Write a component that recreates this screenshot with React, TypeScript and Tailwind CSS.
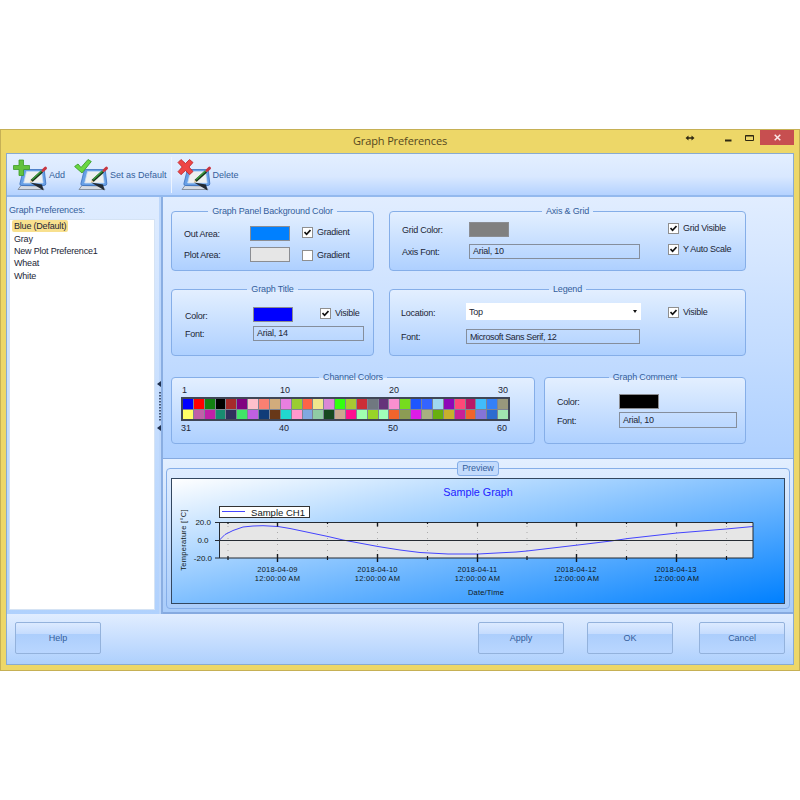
import { useState, type ReactNode } from "react";
import clsx from "clsx";

const PREFERENCES = ["Blue (Default)", "Gray", "New Plot Preference1", "Wheat", "White"];

const CHANNEL_COLORS = [
  "#0000ff", "#ff0000", "#128012", "#000000", "#a52a2a", "#800080", "#ffc0cb", "#fa8072", "#d2ac7c", "#e87fe0",
  "#9acd32", "#ff6347", "#f0e68c", "#da88d6", "#32ff10", "#a8c832", "#cc2e36", "#707880", "#66337a", "#fa90d0",
  "#76dc1e", "#1e56ff", "#3464ff", "#a0d8f0", "#8e08b8", "#ff4878", "#b81868", "#40bcfa", "#3380f8", "#98987c",
  "#ffff66", "#c060a8", "#c020a8", "#188c70", "#30305c", "#40e468", "#c060e0", "#103c78", "#683818", "#20d8d0",
  "#ff98cc", "#80a8e0", "#90cca4", "#184820", "#cca890", "#ff1090", "#a0ffb0", "#98d428", "#a0ffb8", "#f0642c",
  "#8c9c54", "#dc1ce8", "#a8b080", "#68b010", "#c8b02c", "#c82098", "#f0642c", "#8474d8", "#2c6cd0", "#a0e4b0",
];

const MAJOR_TICKS = [
  { x: 106.5, date: "2018-04-09" },
  { x: 206.5, date: "2018-04-10" },
  { x: 306.5, date: "2018-04-11" },
  { x: 405.5, date: "2018-04-12" },
  { x: 505.5, date: "2018-04-13" },
];
const MINOR_TICKS = [57, 156.5, 256.5, 356, 455.5, 555.5];

export default function App() {
  const [selected, setSelected] = useState(PREFERENCES[0]);

  return (
    <div className="h-[800px] w-[800px] overflow-hidden bg-white pt-[129px] font-['Liberation_Sans',Arial,sans-serif] text-[9px] leading-[12px] tracking-[-0.25px] text-[#1c2636]">
      <div className="flex h-[542px] flex-col border border-[#c6b055] bg-[#edd768] px-[5px] pb-[5px]">
        <TitleBar />
        <div className="flex min-h-0 flex-1 flex-col border border-[#8aabcf]">
          <Toolbar />
          <div className="flex min-h-0 flex-1">
            <div className="flex w-[152px] flex-col bg-linear-to-b from-[#dfecff] to-[#b0d1fd] pt-[7px] pr-1 pb-[4px] pl-[2px]">
              <p className="tracking-[-0.15px] text-[#34609c]">Graph Preferences:</p>
              <ul className="mt-[3px] flex-1 border border-[#d5e3f4] bg-white pl-[2px]">
                {PREFERENCES.map((name) => (
                  <li key={name} className="flex h-[12.4px] items-center">
                    <button
                      onClick={() => setSelected(name)}
                      className={clsx(
                        "px-[2px] leading-[12px] tracking-[-0.2px]",
                        selected === name && "rounded-[2px] bg-[#f8e08e]"
                      )}
                    >
                      {name}
                    </button>
                  </li>
                ))}
              </ul>
            </div>
            <Splitter />
            <div className="flex min-w-0 flex-1 flex-col">
              <Settings />
              <Preview />
            </div>
          </div>
          <Footer />
        </div>
      </div>
    </div>
  );
}

function TitleBar() {
  return (
    <div className="relative flex h-[23px] shrink-0 items-start justify-end">
      <span className="absolute inset-x-0 top-[3px] text-center font-['Open_Sans',sans-serif] text-[11px] leading-[16px] tracking-[-0.12px] text-[#55481f]">
        Graph Preferences
      </span>
      <svg className="mt-[4px] mr-[30px] h-[8px] w-[10px]" viewBox="0 0 10 8" fill="#2e2812">
        <path d="M0.5 4 3.5 1.5v1.8h3V1.5L9.5 4 6.5 6.5V4.7h-3v1.8z" />
      </svg>
      <svg className="mt-[4px] mr-[13px] h-[8px] w-[7px]" viewBox="0 0 7 8">
        <path d="M0 6.500h6.5" stroke="#2e2812" strokeWidth="2" />
      </svg>
      <svg className="mt-[4px] mr-[6px] h-[8px] w-[9px]" viewBox="0 0 9 8" fill="none" stroke="#2e2812">
        <path d="M.5 1.5h8v5h-8zM.5 2h8" />
      </svg>
      <button className="flex h-[15px] w-[34px] items-center justify-center bg-[#c74f50]">
        <svg className="h-[7px] w-[7px]" viewBox="0 0 7 7" stroke="#fbe9e9" strokeWidth="1.5">
          <path d="M.7.7l5.6 5.6M6.3.7.7 6.3" />
        </svg>
      </button>
    </div>
  );
}

function Toolbar() {
  return (
    <div className="flex h-[43px] shrink-0 items-center border-b-2 border-[#93b9ee] bg-linear-to-b from-[#e3efff] via-[#d9e8ff] via-55% to-[#b4d2ff] pl-[6px] tracking-normal text-[#34609c]">
      <ToolButton
        label="Add"
        badge={<path d="M6 3h4.500v5.500h6V12.500h-6v6H6v-6H.5v-4H6z" fill="#63c23d" stroke="#3d9c28" strokeWidth=".8" />}
      />
      <div className="w-[9px]" />
      <ToolButton
        label="Set as Default"
        badge={<path d="M.6 9.500 4 7l3 3.500L14 2.500l3.300 2L8 16z" fill="#6ad742" stroke="#3c9e2e" strokeWidth=".9" />}
      />
      <div className="mr-[5px] ml-[4px] h-[36px] w-px bg-[#edf4ff]" />
      <ToolButton
        label="Delete"
        badge={
          <path
            d="M1 5.500 4 2.500l4.500 4L12.500 2.500l3.500 3-4 4.500 4 4.500-3.500 3.200-4-4.200-4.500 4.200L1 14.700 5.200 10z"
            fill="#ee4646"
            stroke="#bb2229"
            strokeWidth=".8"
          />
        }
      />
    </div>
  );
}

function ToolButton({ label, badge }: { label: string; badge: ReactNode }) {
  return (
    <button className="flex items-center gap-px">
      <svg className="h-[36px] w-[35px]" viewBox="0 0 35 36">
        <path d="M8 28.500 5 32.500h26L28.500 29z" fill="#d5dbe4" stroke="#76808e" strokeWidth=".8" />
        <path
          d="M12 12.500h18q1.200 0 1.400 1.500l1.400 12.500q.1 2-1.800 2H8.500q-1.900 0-1.600-1.800L10 14q.4-1.500 2-1.500z"
          fill="#68a0e6"
          stroke="#3a70be"
          strokeWidth=".8"
        />
        <path d="M13.500 14.500h15l1.600 11.500H10.700z" fill="#eef0f0" stroke="#c6dcf4" strokeWidth=".8" />
        <path d="M18.500 24 29 14.500" stroke="#173317" strokeWidth="3" />
        <path d="M19.200 22.500 28.500 14" stroke="#3fa043" strokeWidth="1.500" />
        <path d="M30 13.500l2.500-2.300" stroke="#c73540" strokeWidth="3" strokeLinecap="round" />
        <path d="M16.500 25.500l1.500-2.200 1.700 1.600z" fill="#e8cf9c" />
        <path d="M17 25.500 29 27.500l1.500 6-4-2.500z" fill="#222a33" />
        {badge}
      </svg>
      {label}
    </button>
  );
}

function Splitter() {
  return (
    <div className="flex w-[4px] flex-col items-center justify-center border-r-2 border-[#8aaee2] bg-[#bdd7fb]">
      <svg className="h-[50px] w-[6px] shrink-0 -translate-x-px" viewBox="0 0 6 50">
        <path d="M5 0v6L1 3zM5 44v6l-4-3z" fill="#20304e" />
        <path d="M4 11v29" stroke="#20304e" strokeWidth="1.500" strokeDasharray="1.500 1.500" />
      </svg>
    </div>
  );
}

function Settings() {
  return (
    <div className="flex h-[261px] shrink-0 flex-col bg-linear-to-b from-[#e1edff] to-[#aed0ff] pt-[8px] pl-[8px]">
      <div className="flex gap-[15px]">
        <Group title="Graph Panel Background Color" className="h-[66px] w-[203px]">
          <div className="flex pt-[8px] pl-[12px]">
            <div className="flex w-[118px] flex-col gap-[6px]">
              <Row label="Out Area:" labelClass="w-[66px] pt-[2px]">
                <Swatch className="bg-[#0080ff]" />
              </Row>
              <Row label="Plot Area:" labelClass="w-[66px] pt-[2px]">
                <Swatch className="bg-[#e6e6e6]" />
              </Row>
            </div>
            <div className="flex flex-col gap-[11px]">
              <Check label="Gradient" initial />
              <Check label="Gradient" />
            </div>
          </div>
        </Group>
        <Group title="Axis & Grid" className="h-[66px] w-[357px]">
          <div className="flex pt-[4px] pl-[12px]">
            <div className="flex w-[266px] flex-col gap-[7px]">
              <Row label="Grid Color:" labelClass="w-[67px] pt-[2px]">
                <Swatch className="bg-[#808080]" />
              </Row>
              <Row label="Axis Font:" labelClass="w-[67px] pt-[2px]">
                <FontField value="Arial, 10" className="w-[171px]" />
              </Row>
            </div>
            <div className="flex flex-col gap-[9px]">
              <Check label="Grid Visible" initial />
              <Check label="Y Auto Scale" initial />
            </div>
          </div>
        </Group>
      </div>

      <div className="mt-[12px] flex gap-[15px]">
        <Group title="Graph Title" className="h-[73px] w-[203px]">
          <div className="flex flex-col gap-[4px] pt-[11px] pl-[13px]">
            <Row label="Color:" labelClass="w-[68px] pt-[3px]">
              <Swatch className="bg-[#0000ff]" />
              <div className="ml-[27px]">
                <Check label="Visible" initial />
              </div>
            </Row>
            <Row label="Font:" labelClass="w-[68px] pt-[2px]">
              <FontField value="Arial, 14" className="w-[111px]" />
            </Row>
          </div>
        </Group>
        <Group title="Legend" className="h-[73px] w-[357px]">
          <div className="flex flex-col gap-[9px] pt-[7px] pl-[11px]">
            <Row label="Location:" labelClass="w-[65px] pt-[4px]">
              <div className="flex h-[17px] w-[175px] items-center justify-between bg-white pr-[4px] pl-[3px]">
                Top
                <span className="border-x-[2.500px] border-t-[3px] border-x-transparent border-t-[#111]" />
              </div>
              <div className="ml-[27px] pt-[3px]">
                <Check label="Visible" initial />
              </div>
            </Row>
            <Row label="Font:" labelClass="w-[65px] pt-[2px]">
              <FontField value="Microsoft Sans Serif, 12" className="w-[174px] pt-px tracking-[-0.38px]" />
            </Row>
          </div>
        </Group>
      </div>

      <div className="mt-[15px] flex gap-[9px]">
        <Group title="Channel Colors" className="h-[73px] w-[364px]">
          <div className="w-[338px] pl-[9px] tracking-normal">
            <div className="pl-px">
              <ChannelNumbers values={["1", "10", "20", "30"]} />
            </div>
            <div className="mt-px grid h-[24px] w-[329px] grid-cols-30 gap-px border-2 border-[#3f4656] bg-[#7d8494]">
              {CHANNEL_COLORS.map((color, i) => (
                <span key={i} style={{ backgroundColor: color }} />
              ))}
            </div>
            <div className="mt-px">
              <ChannelNumbers values={["31", "40", "50", "60"]} />
            </div>
          </div>
        </Group>
        <Group title="Graph Comment" className="h-[73px] w-[202px]">
          <div className="flex flex-col gap-[3px] pt-[10px] pl-[12px]">
            <Row label="Color:" labelClass="w-[62px] pt-[2px]">
              <Swatch className="bg-black" />
            </Row>
            <Row label="Font:" labelClass="w-[62px] pt-[3px]">
              <FontField value="Arial, 10" className="h-[16px] w-[118px] pt-px" />
            </Row>
          </div>
        </Group>
      </div>
    </div>
  );
}

function Group({ title, className, children }: { title: string; className?: string; children: ReactNode }) {
  return (
    <fieldset className={clsx("min-w-0 shrink-0 rounded-[4px] border border-[#85aee8] bg-linear-to-b from-[#e3efff] to-[#aed0ff]", className)}>
      <legend className="mx-auto h-[13px] px-[4px] leading-[12px] tracking-[-0.16px] text-[#34609c]">{title}</legend>
      {children}
    </fieldset>
  );
}

function Row({ label, labelClass, children }: { label: string; labelClass: string; children: ReactNode }) {
  return (
    <div className="flex items-start">
      <span className={clsx("shrink-0", labelClass)}>{label}</span>
      {children}
    </div>
  );
}

function Swatch({ className }: { className?: string }) {
  return <button className={clsx("h-[15px] w-[40px] shrink-0 border border-[#8b8d92]", className)} />;
}

function FontField({ value, className }: { value: string; className?: string }) {
  return <div className={clsx("min-h-[15px] shrink-0 border border-[#858e9c] pl-[3px] leading-[12px]", className)}>{value}</div>;
}

function Check({ label, initial = false }: { label: string; initial?: boolean }) {
  const [checked, setChecked] = useState(initial);
  return (
    <button onClick={() => setChecked(!checked)} className="flex h-[12px] items-center gap-[4px]">
      <span className="flex h-[11px] w-[11px] items-center justify-center border border-[#8f8f8f] bg-white">
        {checked && (
          <svg className="h-[7px] w-[7px]" viewBox="0 0 7 7" fill="none" stroke="#111" strokeWidth="1.700">
            <path d="M.5 3 2.600 5.300 6.500 1" />
          </svg>
        )}
      </span>
      {label}
    </button>
  );
}

function ChannelNumbers({ values }: { values: string[] }) {
  return (
    <div className="flex h-[12px]">
      {values.map((v, i) => (
        <span key={v} className={clsx("shrink-0", i === 0 ? "w-[98px]" : i === 3 ? "w-[20px]" : "w-[109px]")}>
          {v}
        </span>
      ))}
    </div>
  );
}

function Preview() {
  return (
    <div className="flex flex-1 flex-col border-t border-b-2 border-[#86aae0] bg-linear-to-b from-[#e3efff] to-[#a9ccfa] px-[3px] pt-[2px] pb-[3px]">
      <fieldset className="flex-1 rounded-[4px] border border-[#85aee8] px-[4px]">
        <legend className="mx-auto h-[15px] rounded-[3px] border border-[#85aee8] bg-[#c3dbfc] px-[4px] leading-[12px] tracking-[-0.05px] text-[#34609c]">
          Preview
        </legend>
        <SampleGraph />
      </fieldset>
    </div>
  );
}

function SampleGraph() {
  return (
    <div className="mt-[2px] h-[126px] border border-[#33475f] bg-linear-to-br/srgb from-white to-[#0080ff]">
      <svg className="block h-[124px] w-[612px]" viewBox="1 1 612 124" fill="#101820" fontSize="7.500" textAnchor="middle">
        <text x="307" y="18" fontSize="10.800" letterSpacing="0" fill="#2222ff">
          Sample Graph
        </text>
        <rect x="48.500" y="28.500" width="90" height="11" fill="#fff" stroke="#333" />
        <path d="M51 33.500h23" stroke="#4646ff" />
        <text x="107" y="37.500" fontSize="9.500" letterSpacing="0">
          Sample CH1
        </text>

        <rect x="48.500" y="44.500" width="533.500" height="35.500" fill="#e6e6e6" />
        {[...MAJOR_TICKS.map((t) => t.x), ...MINOR_TICKS].map((x) => (
          <path key={x} d={`M${x} 48v29`} stroke="#aaa" strokeDasharray="1 5" />
        ))}
        <path
          d="M48.500 62 54 56.500 62 52.500 72 49 82 48l10-.3 15 .8 12 2 38 8L172 62l35 6.500 22 3.500 20 2.500 28 1.500h30l38-2 11-1 51-6 33-4 17-2.500 49-5.500 49-4 27-2.500"
          fill="none"
          stroke="#4444ff"
        />
        <path d="M44 44.500h538v35.500H44M44 62.500h538M48.500 44.500V80" fill="none" stroke="#252b33" />
        {MAJOR_TICKS.map(({ x, date }) => (
          <g key={x}>
            <path d={`M${x} 44v4.500M${x} 76v8`} stroke="#15191f" strokeWidth="1.400" />
            <text x={x} y="94" letterSpacing=".2">
              {date}
            </text>
            <text x={x} y="103" letterSpacing=".3">
              12:00:00 AM
            </text>
          </g>
        ))}
        {MINOR_TICKS.map((x) => (
          <path key={x} d={`M${x} 44v2M${x} 78v4`} stroke="#15191f" strokeWidth="1.200" />
        ))}
        <g textAnchor="end" fontSize="8" letterSpacing="0">
          <text x="40" y="47">20.0</text>
          <text x="37.500" y="65">0.0</text>
          <text x="41" y="83">-20.0</text>
        </g>
        <text x="315" y="116.500" letterSpacing=".2">
          Date/Time
        </text>
        <text transform="translate(15 62) rotate(-90)" letterSpacing=".3">
          Temperature [°C]
        </text>
      </svg>
    </div>
  );
}

function Footer() {
  return (
    <div className="flex h-[50px] shrink-0 items-start bg-linear-to-b from-[#e1edff] to-[#aed0fd] pt-[8px] pr-[8px] pl-[8px]">
      <FooterButton label="Help" />
      <div className="flex-1" />
      <FooterButton label="Apply" />
      <div className="w-[23px]" />
      <FooterButton label="OK" />
      <div className="w-[26px]" />
      <FooterButton label="Cancel" />
    </div>
  );
}

function FooterButton({ label }: { label: string }) {
  return (
    <button className="h-[32px] w-[86px] rounded-[2px] border border-[#93b2dc] bg-[linear-gradient(#dceaff,#c5dcfe_36%,#accefc_38%,#b9d6ff)] tracking-[-0.05px] text-[#34609c]">
      {label}
    </button>
  );
}
